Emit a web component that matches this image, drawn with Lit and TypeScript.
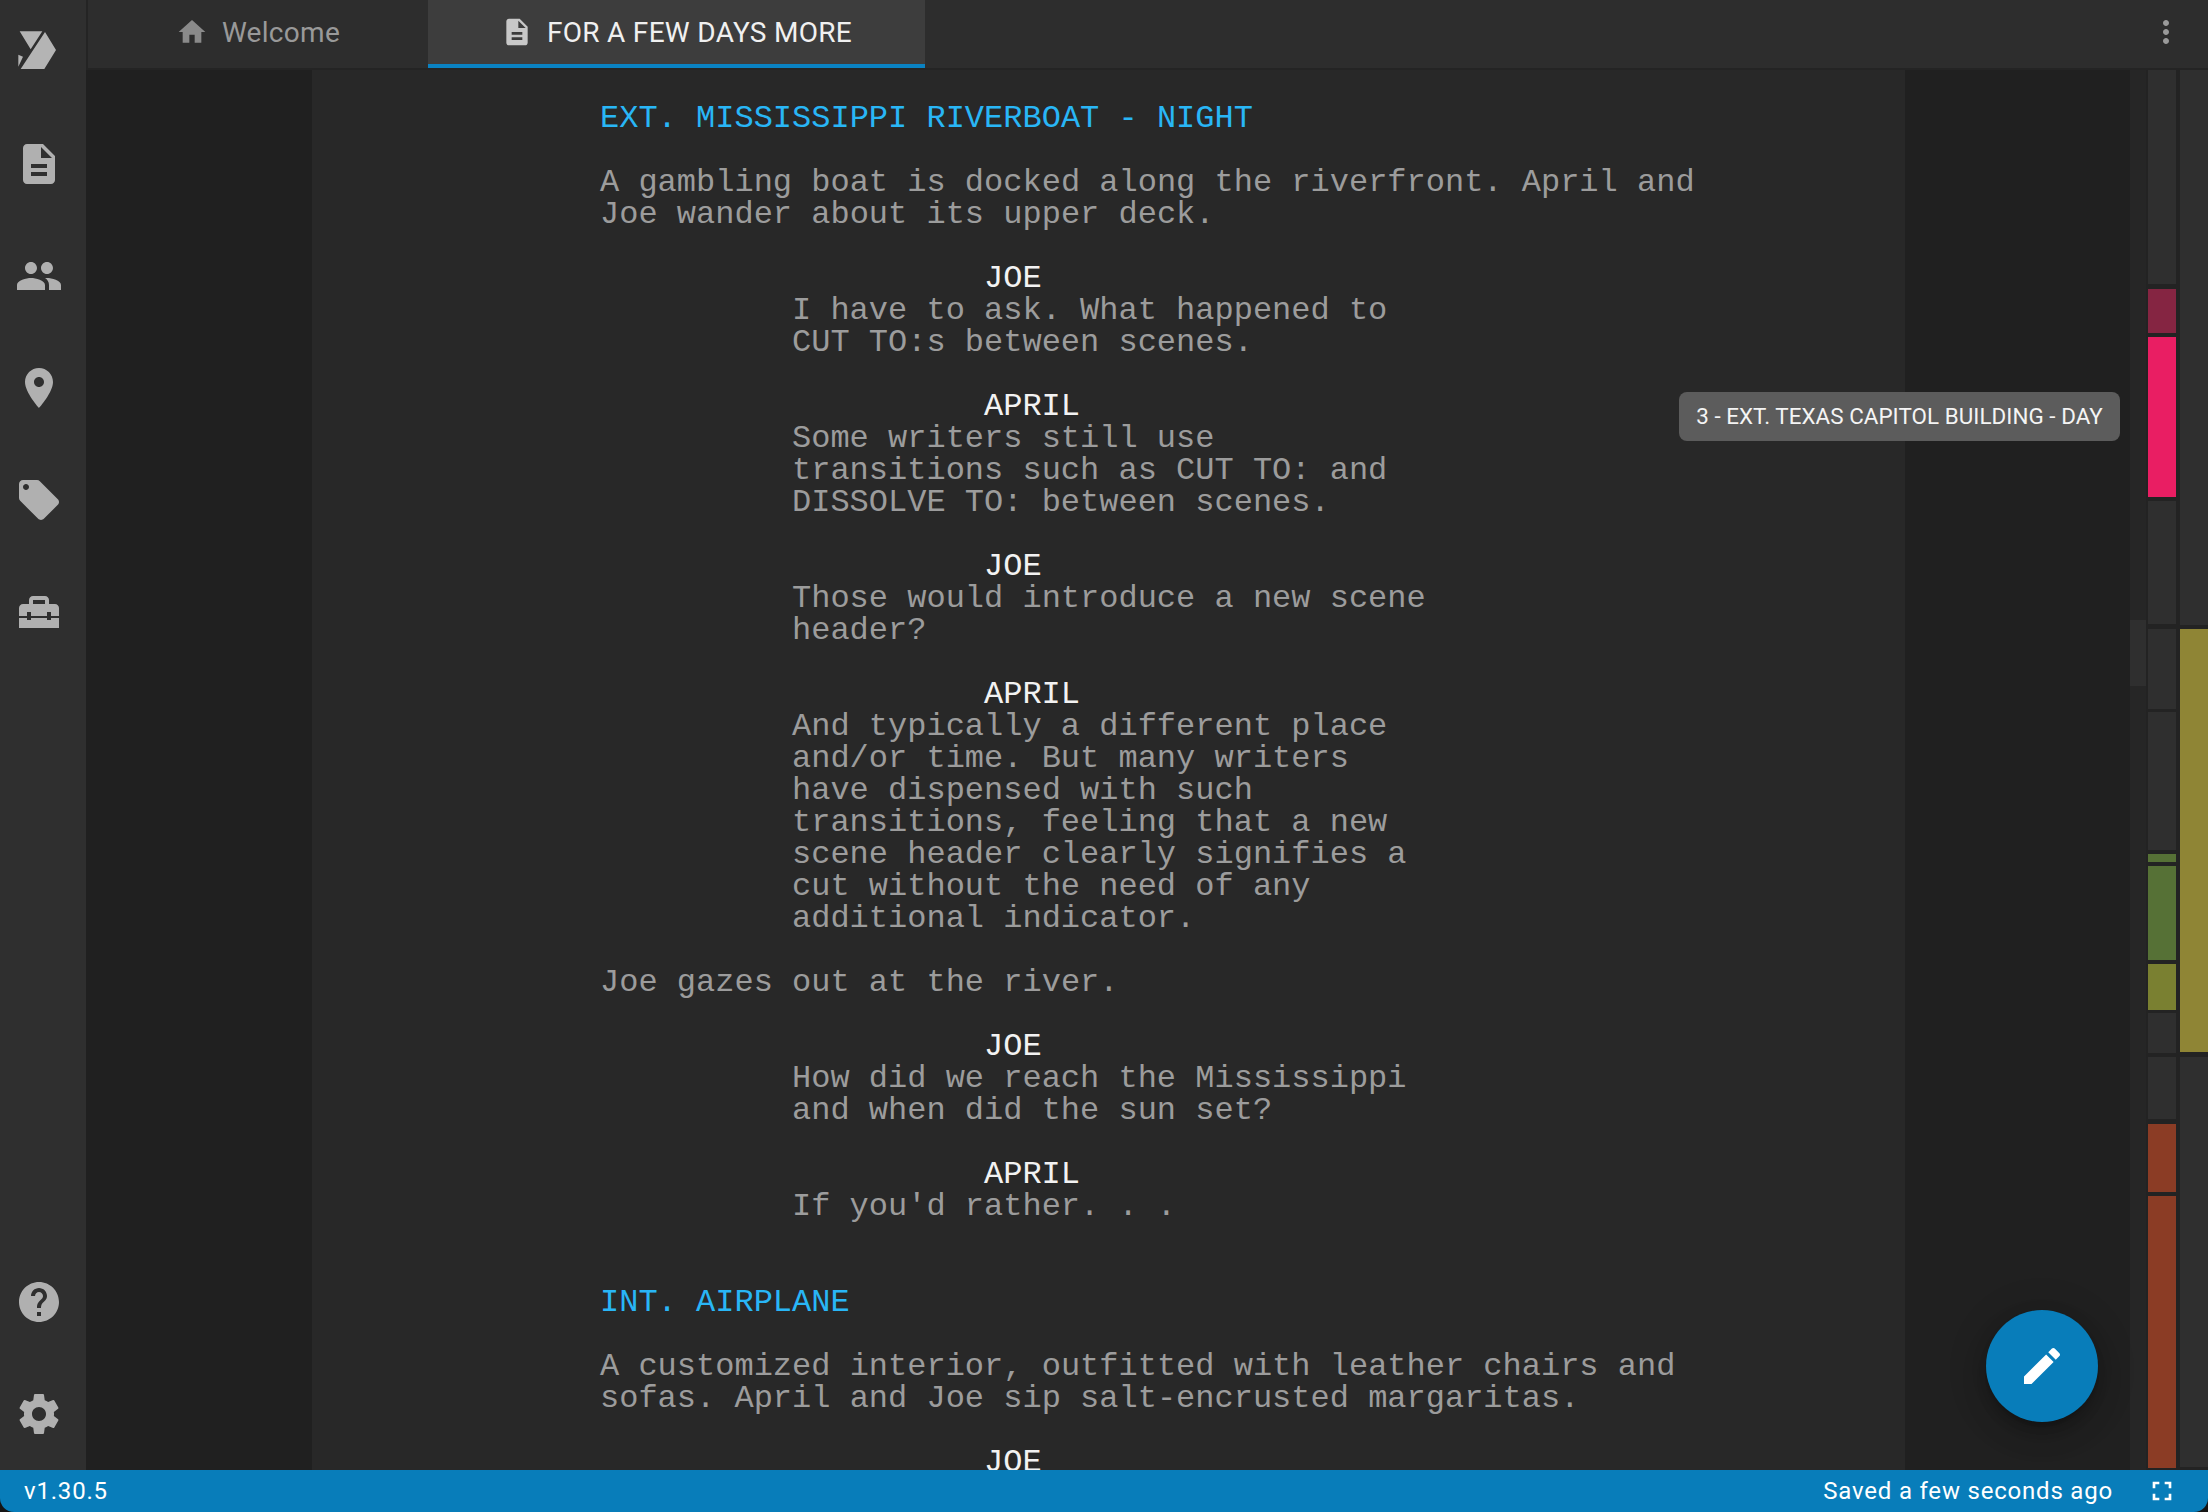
import { LitElement, html, css, svg } from "lit";
import { customElement } from "lit/decorators.js";

const P: Record<string, string> = {
  file: "M14 2H6c-1.1 0-1.99.9-1.99 2L4 20c0 1.1.89 2 1.99 2H18c1.1 0 2-.9 2-2V8l-6-6zm2 16H8v-2h8v2zm0-4H8v-2h8v2zm-3-5V3.5L18.5 9H13z",
  people: "M16 11c1.66 0 2.99-1.34 2.99-3S17.66 5 16 5c-1.66 0-3 1.34-3 3s1.34 3 3 3zm-8 0c1.66 0 2.99-1.34 2.99-3S9.66 5 8 5C6.34 5 5 6.34 5 8s1.34 3 3 3zm0 2c-2.33 0-7 1.17-7 3.5V19h14v-2.5c0-2.33-4.67-3.5-7-3.5zm8 0c-.29 0-.62.02-.97.05 1.16.84 1.97 1.97 1.97 3.45V19h6v-2.5c0-2.33-4.67-3.5-7-3.5z",
  place: "M12 2C8.13 2 5 5.13 5 9c0 5.25 7 13 7 13s7-7.75 7-13c0-3.87-3.13-7-7-7zm0 9.5c-1.38 0-2.5-1.12-2.5-2.5s1.12-2.5 2.5-2.5 2.5 1.12 2.5 2.5-1.12 2.5-2.5 2.5z",
  tag: "M21.41 11.58l-9-9C12.05 2.22 11.55 2 11 2H4c-1.1 0-2 .9-2 2v7c0 .55.22 1.05.59 1.42l9 9c.36.36.86.58 1.41.58.55 0 1.05-.22 1.41-.59l7-7c.37-.36.59-.86.59-1.41 0-.55-.23-1.06-.59-1.42zM5.5 7C4.67 7 4 6.33 4 5.5S4.67 4 5.5 4 7 4.67 7 5.5 6.33 7 5.5 7z",
  toolbox: "M18 16H16V15H8V16H6V15H2V20H22V15H18V16M20 8H17V6C17 4.9 16.1 4 15 4H9C7.9 4 7 4.9 7 6V8H4C2.9 8 2 8.9 2 10V14H6V12H8V14H16V12H18V14H22V10C22 8.9 21.1 8 20 8M15 8H9V6H15V8Z",
  help: "M12 2C6.48 2 2 6.48 2 12s4.48 10 10 10 10-4.48 10-10S17.52 2 12 2zm1 17h-2v-2h2v2zm2.07-7.75l-.9.92C13.45 12.9 13 13.5 13 15h-2v-.5c0-1.1.45-2.1 1.17-2.83l1.24-1.26c.37-.36.59-.86.59-1.41 0-1.1-.9-2-2-2s-2 .9-2 2H8c0-2.21 1.79-4 4-4s4 1.79 4 4c0 .88-.36 1.68-.93 2.25z",
  gear: "M19.43 12.98c.04-.32.07-.64.07-.98s-.03-.66-.07-.98l2.11-1.65c.19-.15.24-.42.12-.64l-2-3.46c-.12-.22-.39-.3-.61-.22l-2.49 1c-.52-.4-1.08-.73-1.69-.98l-.38-2.65C14.46 2.18 14.25 2 14 2h-4c-.25 0-.46.18-.49.42l-.38 2.65c-.61.25-1.17.59-1.69.98l-2.49-1c-.23-.09-.49 0-.61.22l-2 3.46c-.13.22-.07.49.12.64l2.11 1.65c-.04.32-.07.65-.07.98s.03.66.07.98l-2.11 1.65c-.19.15-.24.42-.12.64l2 3.46c.12.22.39.3.61.22l2.49-1c.52.4 1.08.73 1.69.98l.38 2.65c.03.24.24.42.49.42h4c.25 0 .46-.18.49-.42l.38-2.65c.61-.25 1.17-.59 1.69-.98l2.49 1c.23.09.49 0 .61-.22l2-3.46c.12-.22.07-.49-.12-.64l-2.11-1.65zM12 15.5c-1.93 0-3.5-1.57-3.5-3.5s1.57-3.5 3.5-3.5 3.5 1.57 3.5 3.5-1.57 3.5-3.5 3.5z",
  home: "M10 20v-6h4v6h5v-8h3L12 3 2 12h3v8z",
  edit: "M3 17.25V21h3.75L17.81 9.94l-3.75-3.75L3 17.25zM20.71 7.04c.39-.39.39-1.02 0-1.41l-2.34-2.34c-.39-.39-1.02-.39-1.41 0l-1.83 1.83 3.75 3.75 1.83-1.83z",
  full: "M7 14H5v5h5v-2H7v-3zm-2-4h2V7h3V5H5v5zm12 7h-3v2h5v-5h-2v3zM14 5v2h3v3h2V5h-5z",
  more: "M12 8c1.1 0 2-.9 2-2s-.9-2-2-2-2 .9-2 2 .9 2 2 2zm0 2c-1.1 0-2 .9-2 2s.9 2 2 2 2-.9 2-2-.9-2-2-2zm0 6c-1.1 0-2 .9-2 2s.9 2 2 2 2-.9 2-2-.9-2-2-2z",
};

const icon = (n: string, cls = "") =>
  html`<svg class="ic ${cls}" viewBox="0 0 24 24" fill="currentColor">${svg`<path d=${P[n]}></path>`}</svg>`;

type Kind = "s" | "a" | "c" | "d" | "b";
const SCRIPT: [Kind, string][] = [
  ["s", "EXT. MISSISSIPPI RIVERBOAT - NIGHT"], ["b", ""],
  ["a", "A gambling boat is docked along the riverfront. April and"],
  ["a", "Joe wander about its upper deck."], ["b", ""],
  ["c", "JOE"], ["d", "I have to ask. What happened to"], ["d", "CUT TO:s between scenes."], ["b", ""],
  ["c", "APRIL"], ["d", "Some writers still use"], ["d", "transitions such as CUT TO: and"], ["d", "DISSOLVE TO: between scenes."], ["b", ""],
  ["c", "JOE"], ["d", "Those would introduce a new scene"], ["d", "header?"], ["b", ""],
  ["c", "APRIL"], ["d", "And typically a different place"], ["d", "and/or time. But many writers"], ["d", "have dispensed with such"],
  ["d", "transitions, feeling that a new"], ["d", "scene header clearly signifies a"], ["d", "cut without the need of any"], ["d", "additional indicator."], ["b", ""],
  ["a", "Joe gazes out at the river."], ["b", ""],
  ["c", "JOE"], ["d", "How did we reach the Mississippi"], ["d", "and when did the sun set?"], ["b", ""],
  ["c", "APRIL"], ["d", "If you'd rather. . ."], ["b", ""], ["b", ""],
  ["s", "INT. AIRPLANE"], ["b", ""],
  ["a", "A customized interior, outfitted with leather chairs and"],
  ["a", "sofas. April and Joe sip salt-encrusted margaritas."], ["b", ""],
  ["c", "JOE"],
];

const N = "#2f2f2f";
type Seg = [number, number, string];
const COL1: Seg[] = [
  [70, 284, N], [289, 333, "#852542"], [337, 497, "#e91e63"], [501, 624, N], [629, 709, N], [712, 850, N],
  [854, 862, "#567136"], [866, 960, "#567136"], [964, 1010, "#7a8031"], [1013, 1053, N], [1057, 1119, N],
  [1124, 1192, "#8b3c25"], [1196, 1468, "#8b3c25"],
];
const COL2: Seg[] = [[70, 625, N], [629, 1052, "#8f8535"], [1057, 1467, N]];

const col = (segs: Seg[]) => html`<div class="col">
  ${segs.map(([a, b, c], i) => {
    const prev = i ? segs[i - 1][1] : 70;
    return html`<div style="height:${b - a}px;margin-top:${a - prev}px;background:${c}"></div>`;
  })}
</div>`;

@customElement("app-root")
export class AppRoot extends LitElement {
  static styles = css`
    :host { display: block; width: 2208px; height: 1512px; background: #151515; overflow: hidden; }
    .app { position: relative; width: 2208px; height: 1512px; display: grid; grid-template-columns: 86px 1fr; grid-template-rows: 1470px 42px; border-radius: 0 0 14px 14px; overflow: hidden; }
    .ic { display: block; width: 48px; height: 48px; flex: none; }
    .side { background: #2f2f2f; color: #b0b0b0; display: flex; flex-direction: column; }
    .logo { height: 108px; box-sizing: border-box; padding: 16px 6px 22px 0; }
    .logo svg { width: 80px; height: 70px; display: block; }
    .item { height: 112px; display: flex; align-items: center; justify-content: center; padding-right: 8px; box-sizing: border-box; }
    .spacer { flex: 1; }
    .main { display: flex; flex-direction: column; min-width: 0; background: #202020; }
    .tabs { height: 68px; box-sizing: content-box; background: #2d2d2d; border-bottom: 2px solid #242424; border-left: 2px solid #242424; display: flex; font-family: Roboto, sans-serif; font-size: 28px; letter-spacing: .3px; position: relative; }
    .tab { display: flex; align-items: center; justify-content: center; gap: 14px; height: 68px; box-sizing: border-box; padding-bottom: 4px; color: #999; }
    .tab .ic { width: 32px; height: 32px; }
    .tab.w { width: 340px; }
    .tab.a { width: 497px; background: #3d3d3d; color: #f0f0f0; border-bottom: 4px solid #0a82c2; padding-bottom: 0; }
    .tab.a .ic { color: #c8c8c8; }
    .tab.w .ic { color: #8a8a8a; }
    .more { position: absolute; left: 2060px; top: 14px; width: 36px; height: 36px; color: #9a9a9a; }
    .more .ic { width: 36px; height: 36px; }
    .body { flex: 1; display: flex; min-height: 0; }
    .gutter { width: 226px; flex: none; background: #202020; }
    .editor { width: 1593px; flex: none; background: #282828; box-sizing: border-box; padding: 33px 0 0 288px; overflow: hidden; font-family: "Liberation Mono", monospace; font-size: 32px; line-height: 32px; color: #9c9c9c; }
    .l { height: 32px; white-space: pre; }
    .l.s { color: #29b6f6; }
    .l.c { color: #f2f2f2; padding-left: 384px; }
    .l.d { padding-left: 192px; }
    .after { flex: 1; background: #202020; }
    .track { width: 16px; flex: none; background: #262626; position: relative; }
    .thumb { position: absolute; left: 0; top: 550px; width: 16px; height: 66px; background: #2f2f2f; }
    .rail { width: 62px; flex: none; background: #232323; display: flex; gap: 4px; padding-left: 2px; box-sizing: border-box; }
    .col { width: 28px; flex: none; overflow: hidden; }
    .status { grid-column: 1 / 3; background: #087dba; color: #fff; font-family: Roboto, sans-serif; font-size: 24px; letter-spacing: .8px; display: flex; align-items: center; padding: 0 30px 0 24px; }
    .status .grow { flex: 1; }
    .status .ic { width: 32px; height: 32px; margin-left: 33px; }
    .tip { position: absolute; left: 1679px; top: 392px; width: 441px; height: 49px; box-sizing: border-box; padding-bottom: 2px; background: #5c5c5c; border-radius: 8px; color: #f4f4f4; font-family: Roboto, sans-serif; font-size: 22.4px; letter-spacing: .05px; display: flex; align-items: center; justify-content: center; white-space: nowrap; }
    .fab { position: absolute; left: 1986px; top: 1310px; width: 112px; height: 112px; border-radius: 50%; background: #087dba; color: #fff; display: flex; align-items: center; justify-content: center; box-shadow: 0 6px 10px -3px rgba(0,0,0,.25), 0 12px 24px 2px rgba(0,0,0,.14), 0 4px 36px 6px rgba(0,0,0,.12); }
  `;

  render() {
    return html`<div class="app">
      <aside class="side">
        <div class="logo">
          <svg viewBox="0 0 240 210" fill="#b4b4b4"><path d="M59 46H127L92 100ZM135 48L168 102L133 159H62ZM55 116L69 122L55 152Z"></path></svg>
        </div>
        ${["file", "people", "place", "tag", "toolbox"].map((n) => html`<div class="item">${icon(n)}</div>`)}
        <div class="spacer"></div>
        ${["help", "gear"].map((n) => html`<div class="item">${icon(n)}</div>`)}
      </aside>
      <main class="main">
        <nav class="tabs">
          <div class="tab w">${icon("home")}<span>Welcome</span></div>
          <div class="tab a">${icon("file")}<span>FOR A FEW DAYS MORE</span></div>
          <div class="more">${icon("more")}</div>
        </nav>
        <div class="body">
          <div class="gutter"></div>
          <div class="editor">
            ${SCRIPT.map(([k, t]) => html`<div class="l ${k}">${t}</div>`)}
          </div>
          <div class="after"></div>
          <div class="track"><div class="thumb"></div></div>
          <div class="rail">${col(COL1)}${col(COL2)}</div>
        </div>
      </main>
      <footer class="status">
        <span>v1.30.5</span><span class="grow"></span><span>Saved a few seconds ago</span>${icon("full")}
      </footer>
      <div class="tip">3 - EXT. TEXAS CAPITOL BUILDING - DAY</div>
      <div class="fab">${icon("edit")}</div>
    </div>`;
  }
}
